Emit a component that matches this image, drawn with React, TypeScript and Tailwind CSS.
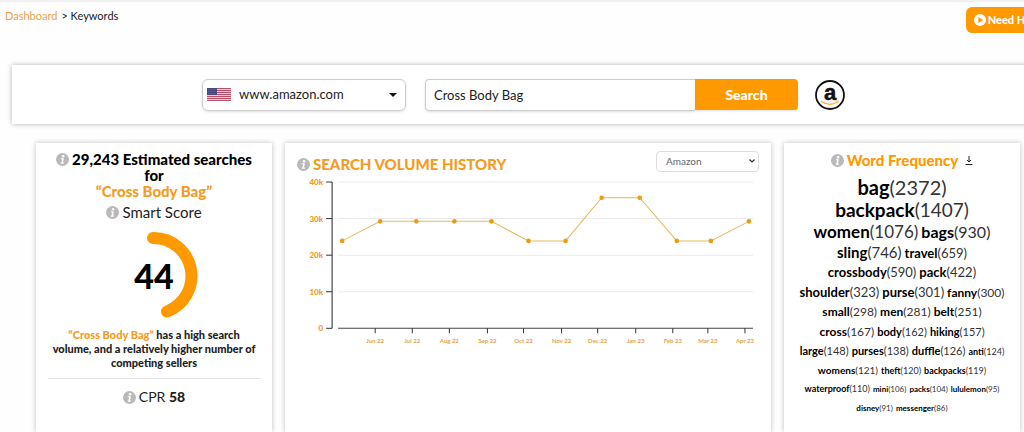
import React from 'react';

const history = [
  { x: 57, value: 23900 },
  { x: 95, value: 29243 },
  { x: 131, value: 29243 },
  { x: 169, value: 29243 },
  { x: 206, value: 29243 },
  { x: 243, value: 23900 },
  { x: 280, value: 23900 },
  { x: 316, value: 35700 },
  { x: 354, value: 35700 },
  { x: 391, value: 23900 },
  { x: 425, value: 23900 },
  { x: 463, value: 29243 },
];

const months = [
  { x: 90, label: 'Jun 22' },
  { x: 127, label: 'Jul 22' },
  { x: 164, label: 'Aug 22' },
  { x: 202, label: 'Sep 22' },
  { x: 238, label: 'Oct 22' },
  { x: 276, label: 'Nov 22' },
  { x: 312, label: 'Dec 22' },
  { x: 350, label: 'Jan 23' },
  { x: 387, label: 'Feb 23' },
  { x: 422, label: 'Mar 23' },
  { x: 459, label: 'Apr 23' },
];

const yTicks = [
  { value: 40000, label: '40k' },
  { value: 30000, label: '30k' },
  { value: 20000, label: '20k' },
  { value: 10000, label: '10k' },
  { value: 0, label: '0' },
];

const wordRows = [
  { height: 'h-[22px]', words: [{ word: 'bag', count: 2372, size: 'text-[20px]' }] },
  { height: 'h-[22px]', words: [{ word: 'backpack', count: 1407, size: 'text-[19px]' }] },
  {
    height: 'h-[22px]',
    words: [
      { word: 'women', count: 1076, size: 'text-[17px]' },
      { word: 'bags', count: 930, size: 'text-[16px]' },
    ],
  },
  {
    height: 'h-5',
    words: [
      { word: 'sling', count: 746, size: 'text-[15px]' },
      { word: 'travel', count: 659, size: 'text-[13px]' },
    ],
  },
  {
    height: 'h-5',
    words: [
      { word: 'crossbody', count: 590, size: 'text-[13px]' },
      { word: 'pack', count: 422, size: 'text-[13px]' },
    ],
  },
  {
    height: 'h-5',
    words: [
      { word: 'shoulder', count: 323, size: 'text-[13px]' },
      { word: 'purse', count: 301, size: 'text-[13px]' },
      { word: 'fanny', count: 300, size: 'text-[12px]' },
    ],
  },
  {
    height: 'h-5',
    words: [
      { word: 'small', count: 298, size: 'text-[12px]' },
      { word: 'men', count: 281, size: 'text-[12px]' },
      { word: 'belt', count: 251, size: 'text-[12px]' },
    ],
  },
  {
    height: 'h-[19px]',
    words: [
      { word: 'cross', count: 167, size: 'text-[12px]' },
      { word: 'body', count: 162, size: 'text-[11px]' },
      { word: 'hiking', count: 157, size: 'text-[11px]' },
    ],
  },
  {
    height: 'h-[19px]',
    words: [
      { word: 'large', count: 148, size: 'text-[11px]' },
      { word: 'purses', count: 138, size: 'text-[11px]' },
      { word: 'duffle', count: 126, size: 'text-[11px]' },
      { word: 'anti', count: 124, size: 'text-[9px]' },
    ],
  },
  {
    height: 'h-[19px]',
    words: [
      { word: 'womens', count: 121, size: 'text-[10px]' },
      { word: 'theft', count: 120, size: 'text-[9px]' },
      { word: 'backpacks', count: 119, size: 'text-[9px]' },
    ],
  },
  {
    height: 'h-[19px]',
    words: [
      { word: 'waterproof', count: 110, size: 'text-[9px]' },
      { word: 'mini', count: 106, size: 'text-[8px]' },
      { word: 'packs', count: 104, size: 'text-[8px]' },
      { word: 'lululemon', count: 95, size: 'text-[8px]' },
    ],
  },
  {
    height: 'h-[19px]',
    words: [
      { word: 'disney', count: 91, size: 'text-[8px]' },
      { word: 'messenger', count: 86, size: 'text-[8px]' },
    ],
  },
];

const toY = (value: number) => 154 - (value / 40000) * 146;

const InfoIcon: React.FC = () => (
  <svg viewBox="0 0 13 13" className="h-[13px] w-[13px] shrink-0" aria-hidden="true">
    <circle cx="6.5" cy="6.5" r="6.5" fill="#b9b9b9" />
    <circle cx="7.1" cy="3.2" r="1.3" fill="#fff" />
    <path d="M4.9 5.200h3l-.9 4.400h1l-.2 1.100H4.600l.2-1.100h.7l.6-3.300H4.700z" fill="#fff" />
  </svg>
);

const PlayIcon: React.FC = () => (
  <svg viewBox="0 0 12 12" className="h-3 w-3 shrink-0" aria-hidden="true">
    <circle cx="6" cy="6" r="6" fill="#fff" />
    <path d="M4.300 3v6L9 6z" fill="#ff9900" />
  </svg>
);

const UsFlag: React.FC = () => (
  <svg viewBox="0 0 24 13" className="h-[13px] w-6 shrink-0" aria-hidden="true">
    <rect width="24" height="13" fill="#edc9d0" />
    {[0, 2, 4, 6, 8, 10, 12].map((y) => (
      <rect key={y} y={y} width="24" height="1" fill="#b8506a" />
    ))}
    <rect width="10" height="7" fill="#474a7c" />
    {[1.5, 3.5, 5.5].map((y) => (
      <path key={y} d={`M1 ${y}h8`} stroke="#8a8cb4" strokeWidth=".5" strokeDasharray=".6 1" />
    ))}
  </svg>
);

const AmazonLogo: React.FC = () => (
  <svg viewBox="0 0 30 30" className="h-[30px] w-[30px] shrink-0" role="img" aria-label="Amazon">
    <circle cx="15" cy="15" r="14" fill="#fff" stroke="#111" strokeWidth="1.8" />
    <text
      x="15"
      y="20"
      textAnchor="middle"
      fontSize="22"
      fill="#111"
      stroke="#111"
      strokeWidth=".5"
      className="font-['Liberation_Sans',sans-serif] font-bold"
    >
      a
    </text>
    <path d="M6.500 21.500c5 3.400 11 3.400 15.500.8" fill="none" stroke="#f7a733" strokeWidth="1.2" strokeLinecap="round" />
    <path d="M20.800 21.200l2.700-.3-.8 2.300" fill="none" stroke="#f7a733" strokeWidth=".8" />
  </svg>
);

const HistoryChart: React.FC = () => (
  <svg viewBox="0 0 485 176" className="block w-full" role="img" aria-label="Search volume history">
    {yTicks.map((tick) => (
      <g key={tick.label}>
        {tick.value > 0 && <path d={`M53 ${toY(tick.value)}H467`} stroke="#e9e9e9" />}
        <path d={`M41 ${toY(tick.value)}H47`} stroke="#333" />
        <text x="38" y={toY(tick.value) + 3} textAnchor="end" fontSize="8" fill="#f0981d" className="font-black">
          {tick.label}
        </text>
      </g>
    ))}
    <path d="M47 8V154" stroke="#222" />
    <path d="M53 154H467" stroke="#444" />
    {months.map((month) => (
      <g key={month.label}>
        <path d={`M${month.x} 154v5`} stroke="#333" />
        <text x={month.x} y="169" textAnchor="middle" fontSize="6" fill="#e8a04a" className="font-bold">
          {month.label}
        </text>
      </g>
    ))}
    <polyline
      points={history.map((p) => `${p.x},${toY(p.value)}`).join(' ')}
      fill="none"
      stroke="#e8b95c"
    />
    {history.map((p) => (
      <circle key={p.x} cx={p.x} cy={toY(p.value)} r="2.3" fill="#ef9a15" />
    ))}
  </svg>
);

const App: React.FC = () => {
  return (
    <div className="flex h-screen flex-col overflow-hidden border-t-2 border-[#f1f1f1] bg-[#fefefe] font-[Lato,sans-serif] text-[#222]">
      {/* Breadcrumb */}
      <header className="flex items-start justify-between pt-[5px] pl-[5px]">
        <nav className="flex gap-1 pt-px text-[11px] leading-4">
          <a href="/dashboard" className="text-[#eba04c]">Dashboard</a>
          <span>&gt; Keywords</span>
        </nav>
        <button className="-mr-6 flex h-[26px] shrink-0 items-center gap-0.5 rounded-md bg-[#ff9900] px-2 text-[11px] font-black text-white">
          <PlayIcon />
          Need Help
        </button>
      </header>

      {/* Search bar */}
      <form
        className="mt-8 -mr-3 ml-3 flex h-[59px] shrink-0 items-center bg-white pl-[190px] shadow-[0_0_5px_rgba(0,0,0,0.3)]"
        onSubmit={(e) => e.preventDefault()}
      >
        <label className="relative flex h-8 w-[204px] shrink-0 items-center rounded-md border border-[#ccc] pl-1 shadow-sm">
          <UsFlag />
          <select aria-label="Marketplace" className="h-full flex-1 appearance-none bg-transparent pl-2 text-[13px] outline-none">
            <option>www.amazon.com</option>
          </select>
          <svg viewBox="0 0 8 4" className="pointer-events-none absolute right-2 h-1 w-2" aria-hidden="true">
            <path d="M0 0h8L4 4z" fill="#111" />
          </svg>
        </label>
        <input
          aria-label="Keyword"
          defaultValue="Cross Body Bag"
          className="ml-[19px] h-8 w-[270px] rounded-l-sm border border-r-0 border-[#ccc] pl-2 text-[13px] shadow-sm outline-none"
        />
        <button className="mr-[17px] h-[31px] w-[103px] rounded-r-sm bg-[#ff9900] text-[14px] font-black text-white shadow-sm">
          Search
        </button>
        <AmazonLogo />
      </form>

      <main className="grid flex-1 grid-cols-[236px_1fr_236px] gap-[13px] pt-[19px] pr-1 pl-9">
        {/* Smart score */}
        <section className="bg-white px-3 pt-2 text-center shadow-[0_0_5px_rgba(0,0,0,0.25)]">
          <h2 className="text-[15px] leading-4 font-black text-black">
            <span className="flex items-center justify-center gap-[3px]">
              <InfoIcon />
              29,243 Estimated searches
            </span>
            for
            <span className="block text-[#f39c1f]">“Cross Body Bag”</span>
          </h2>
          <p className="mt-[5px] flex items-center justify-center gap-[3px] text-[15px] leading-4">
            <InfoIcon />
            Smart Score
          </p>
          <div className="mt-3 grid place-items-center">
            <svg viewBox="0 0 88 88" className="col-start-1 row-start-1 h-[88px] w-[88px]" aria-hidden="true">
              <path d="M43 6A38 38 0 0 1 57 79.500" fill="none" stroke="#ff9900" strokeWidth="12" strokeLinecap="round" />
            </svg>
            <strong className="col-start-1 row-start-1 text-[34px] leading-8 font-black text-black">44</strong>
          </div>
          <p className="mt-2 text-[11px] leading-[14px] font-black">
            <span className="block">
              <span className="text-[#f39c1f]">“Cross Body Bag”</span> has a high search
            </span>
            volume, and a relatively higher number of competing sellers
          </p>
          <hr className="mt-2 border-[#e5e5e5]" />
          <p className="mt-2 flex items-center justify-center gap-[3px] text-[14px] leading-5">
            <InfoIcon />
            <span>CPR <b className="font-black">58</b></span>
          </p>
        </section>

        {/* Search volume history */}
        <section className="bg-white pt-[9px] shadow-[0_0_5px_rgba(0,0,0,0.25)]">
          <div className="flex h-[22px] items-center justify-between pr-3 pl-3">
            <h2 className="flex items-center gap-[3px] pt-0.5 text-[15px] leading-5 font-black text-[#f39c1f]">
              <InfoIcon />
              SEARCH VOLUME HISTORY
            </h2>
            <div className="relative -mt-1 flex items-center">
              <select aria-label="Source" className="h-[21px] w-[103px] appearance-none rounded border border-[#ddd] bg-white pl-[9px] text-[10px] text-[#666]">
                <option>Amazon</option>
              </select>
              <svg viewBox="0 0 6 4" className="pointer-events-none absolute right-1 h-1 w-1.5" aria-hidden="true">
                <path d="M.5.5L3 3 5.500.5" fill="none" stroke="#333" strokeWidth="1.2" />
              </svg>
            </div>
          </div>
          <HistoryChart />
        </section>

        {/* Word frequency */}
        <section className="bg-white pt-[7px] text-center shadow-[0_0_5px_rgba(0,0,0,0.25)]">
          <h2 className="flex items-center justify-center gap-[3px] text-[15px] leading-5 font-black text-[#ff9900]">
            <InfoIcon />
            Word Frequency
            <button aria-label="Download" className="ml-1">
              <svg viewBox="0 0 8 9" className="h-[9px] w-2" fill="none" stroke="#222" aria-hidden="true">
                <path d="M4 0v6M2 4l2 2 2-2M.5 8.500h7" />
              </svg>
            </button>
          </h2>
          <ul className="mt-1.5 leading-none whitespace-nowrap text-black">
            {wordRows.map((row, index) => (
              <li key={index} className={`flex items-center justify-center ${row.height}`}>
                <span className="flex items-baseline gap-[3px]">
                  {row.words.map((item) => (
                    <span key={item.word} className={item.size}>
                      <b className="font-bold">{item.word}</b>
                      <span className="text-[#333]">({item.count})</span>
                    </span>
                  ))}
                </span>
              </li>
            ))}
          </ul>
        </section>
      </main>
    </div>
  );
};

export default App;
